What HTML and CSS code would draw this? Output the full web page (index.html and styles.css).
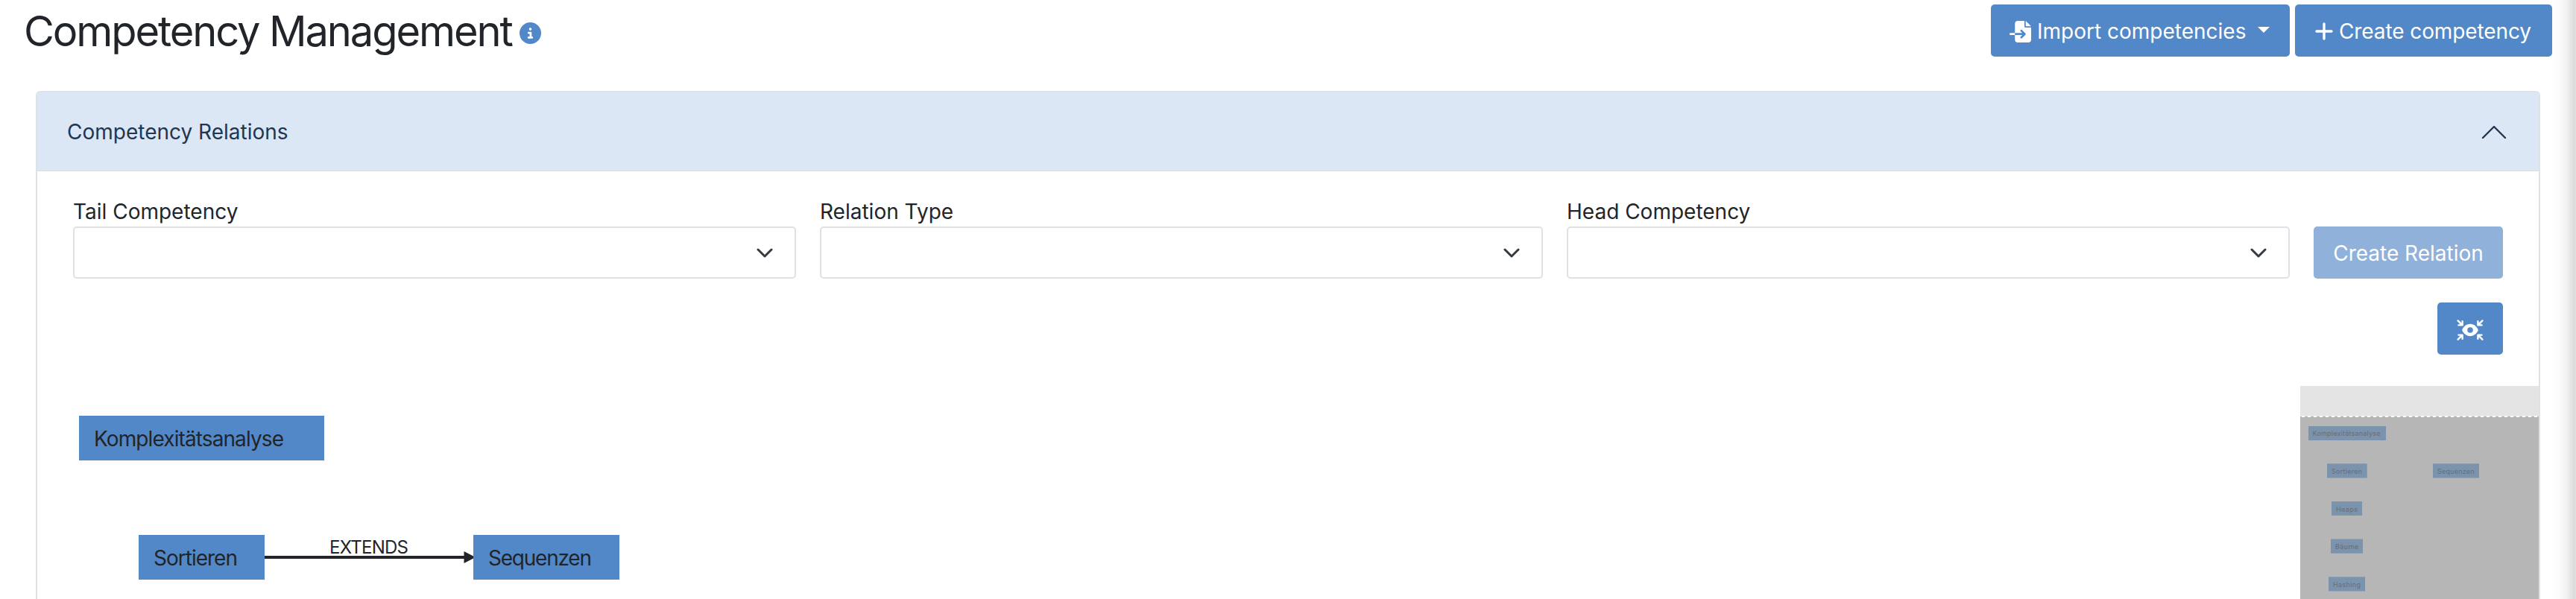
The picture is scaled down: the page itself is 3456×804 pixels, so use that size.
FILE: index.html
```
<!DOCTYPE html>
<html lang="en">
<head>
<meta charset="utf-8">
<title>Competency Management</title>
<link rel="stylesheet" href="styles.css">
</head>
<body>
<div class="page">
  <header class="page-header">
    <h1 class="title">Competency Management</h1>
    <svg class="info-icon" viewBox="0 0 512 512"><path fill="currentColor" d="M256 512A256 256 0 1 0 256 0a256 256 0 1 0 0 512zM216 336h24V272H216c-13.300 0-24-10.700-24-24s10.700-24 24-24h48c13.300 0 24 10.700 24 24v88h8c13.300 0 24 10.700 24 24s-10.700 24-24 24H216c-13.300 0-24-10.700-24-24s10.700-24 24-24zm40-208a32 32 0 1 1 0 64 32 32 0 1 1 0-64z"/></svg>
    <div class="actions">
      <button class="btn btn-import">
        <svg class="icon-import" viewBox="0 0 512 512"><path fill="currentColor" d="M128 64c0-35.300 28.700-64 64-64H352V128c0 17.700 14.300 32 32 32H512V448c0 35.300-28.700 64-64 64H192c-35.300 0-64-28.700-64-64V336H302.100l-39 39c-9.400 9.400-9.400 24.600 0 33.900s24.600 9.400 33.900 0l80-80c9.400-9.400 9.400-24.600 0-33.900l-80-80c-9.400-9.400-24.600-9.400-33.900 0s-9.400 24.600 0 33.900l39 39H128V64zm0 224v48H24c-13.300 0-24-10.700-24-24s10.700-24 24-24H128zM512 128H384V0L512 128z"/></svg>
        <span class="btn-label label-import">Import competencies</span>
        <span class="caret"></span>
      </button>
      <button class="btn btn-create">
        <svg class="icon-plus" viewBox="0 0 24 24"><path d="M12 2v20M2 12h20" stroke="currentColor" stroke-width="3.400" stroke-linecap="round"/></svg>
        <span class="btn-label label-create">Create competency</span>
      </button>
    </div>
  </header>

  <section class="card">
    <div class="card-header">
      <span class="card-title">Competency Relations</span>
      <svg class="chevron-up" viewBox="0 0 34 18"><path d="M2 17 17 2l15 15" fill="none" stroke="currentColor" stroke-width="2.400" stroke-linecap="round" stroke-linejoin="round"/></svg>
    </div>
    <div class="card-body">
      <div class="form-row">
        <label class="field"><span class="field-label">Tail Competency</span>
          <span class="select"><svg class="chevron-down" viewBox="0 0 24 14"><path d="m3 3 9 9 9-9" fill="none" stroke="currentColor" stroke-width="3" stroke-linecap="round" stroke-linejoin="round"/></svg></span></label>
        <label class="field"><span class="field-label">Relation Type</span>
          <span class="select"><svg class="chevron-down" viewBox="0 0 24 14"><path d="m3 3 9 9 9-9" fill="none" stroke="currentColor" stroke-width="3" stroke-linecap="round" stroke-linejoin="round"/></svg></span></label>
        <label class="field"><span class="field-label">Head Competency</span>
          <span class="select"><svg class="chevron-down" viewBox="0 0 24 14"><path d="m3 3 9 9 9-9" fill="none" stroke="currentColor" stroke-width="3" stroke-linecap="round" stroke-linejoin="round"/></svg></span></label>
        <button class="btn btn-relation" disabled><span class="btn-label">Create Relation</span></button>
      </div>
      <div class="tool-row">
        <button class="btn btn-center">
          <svg class="icon-center" viewBox="0 0 36 30">
            <g fill="none" stroke="currentColor" stroke-width="2.400" stroke-linecap="round" stroke-linejoin="round">
              <path d="M1.600 2.400 7.300 8.100M7.600 3.300V8.400H2.500"/>
              <path d="M34.400 2.400 28.700 8.100M28.400 3.300V8.400H33.500"/>
              <path d="M1.600 27.600 7.300 21.900M7.600 26.700V21.600H2.500"/>
              <path d="M34.400 27.600 28.700 21.900M28.400 26.700V21.600H33.500"/>
            </g>
            <path fill="currentColor" fill-rule="evenodd" d="M18 6.800c5.100 0 8.800 3.700 10.600 7.400.2.500.2 1.100 0 1.600C26.800 19.500 23.100 23.200 18 23.200S9.200 19.500 7.400 15.800c-.2-.5-.2-1.100 0-1.600C9.200 10.500 12.900 6.800 18 6.800zm0 4.400a3.800 3.800 0 1 0 0 7.600 3.800 3.800 0 1 0 0-7.600z"/>
          </svg>
        </button>
      </div>
      <div class="graph">
        <svg class="graph-canvas" width="3036" height="286" viewBox="50 518 3036 286">
          <g class="nodes">
            <rect x="106" y="558" width="329" height="60"/>
            <rect x="186" y="718" width="169" height="60"/>
          </g>
          <path class="edge" d="M355 748H624"/>
          <path class="arrow" d="M622.500 740 638 748 622.500 756z"/>
          <g class="nodes"><rect x="635" y="718" width="196" height="60"/></g>
          <g class="node-text">
            <text x="126" y="599" textLength="255">Komplexitätsanalyse</text>
            <text x="206" y="759" textLength="113">Sortieren</text>
            <text x="655" y="759" textLength="139">Sequenzen</text>
          </g>
          <text class="edge-text" x="442" y="743" textLength="106">EXTENDS</text>
        </svg>
        <svg class="minimap" width="320" height="286" viewBox="3086 518 320 286">
          <rect class="mini-view" x="3086" y="559" width="320" height="245"/>
          <path class="mini-dash" d="M3088 559H3406"/>
          <g class="mini-nodes">
            <rect x="3097" y="572" width="104" height="19"/>
            <rect x="3122" y="622.300" width="53.700" height="19.200"/>
            <rect x="3264" y="622.300" width="62" height="19.200"/>
            <rect x="3128" y="673" width="41" height="19"/>
            <rect x="3127" y="723.500" width="43" height="19.200"/>
            <rect x="3124" y="774.300" width="49" height="19.200"/>
          </g>
          <g class="mini-text">
            <text x="3102.500" y="585" textLength="91">Komplexitätsanalyse</text>
            <text x="3128" y="636" textLength="41">Sortieren</text>
            <text x="3270" y="636" textLength="49.500">Sequenzen</text>
            <text x="3134" y="687" textLength="29">Heaps</text>
            <text x="3133" y="737" textLength="31">Bäume</text>
            <text x="3130" y="788" textLength="37">Hashing</text>
          </g>
        </svg>
      </div>
    </div>
  </section>
  <div class="edge-shadow"></div>
</div>
</body>
</html>
```
FILE: styles.css
```
* { box-sizing: border-box; }

body {
  margin: 0;
  background: #fff;
  color: #212529;
  font-family: Inter, "Liberation Sans", sans-serif;
  font-size: 28px;
  font-weight: 430;
  line-height: 42px;
}

.page {
  position: relative;
  display: flex;
  flex-direction: column;
  height: 804px;
  overflow: hidden;
}

.page-header {
  display: flex;
  align-items: flex-start;
  height: 122px;
  padding: 6px 32px 0;
}

.title {
  margin: 0;
  font-size: 56px;
  font-weight: 430;
  line-height: 72px;
  letter-spacing: -2.1px;
  white-space: nowrap;
}

.info-icon {
  width: 29px;
  height: 29px;
  margin: 24px 0 0 10px;
  color: #5288c8;
}

.actions { display: flex; gap: 7px; margin-left: auto; }

.btn {
  display: flex;
  align-items: center;
  height: 70px;
  padding: 2px 25px 0;
  border: 0;
  border-radius: 5px;
  background: #5288c8;
  color: #fff;
  font: inherit;
  white-space: nowrap;
}

.btn-import { width: 401px; }
.btn-create { width: 345px; }
.icon-import { width: 29px; height: 29px; margin-top: 1px; }
.label-import { margin-left: 8px; }
.caret {
  margin: -4px 2px 0 auto;
  border-top: 8px solid currentColor;
  border-left: 8px solid transparent;
  border-right: 8px solid transparent;
}
.icon-plus { width: 24px; height: 24px; margin-left: 2px; }
.label-create { margin-left: 8px; letter-spacing: -0.1px; }

.card {
  flex: 1;
  display: flex;
  flex-direction: column;
  margin: 0 48px;
  border: 2px solid #dee2e6;
  border-bottom: 0;
  border-radius: 6px 6px 0 0;
  overflow: hidden;
}

.card-header {
  display: flex;
  align-items: center;
  justify-content: space-between;
  height: 106px;
  padding: 2px 43px 0 40px;
  border-bottom: 2px solid #dee2e6;
  background: #dbe7f5;
  color: #213651;
}

.chevron-up { width: 34px; height: 18px; }

.card-body { display: flex; flex-direction: column; }

.form-row {
  display: flex;
  align-items: flex-end;
  gap: 32px;
  padding: 32px 48px 0;
}

.field { flex: 1; display: flex; flex-direction: column; }
.field-label { margin-bottom: -2px; line-height: 44px; }

.select {
  display: flex;
  align-items: center;
  justify-content: flex-end;
  height: 70px;
  padding-right: 28px;
  border: 2px solid #dee2e6;
  border-radius: 5px;
  color: #343a40;
}
.chevron-down { width: 24px; height: 14px; }

.btn-relation { width: 254px; justify-content: center; background: #8fb1da; }

.tool-row { display: flex; justify-content: flex-end; padding: 32px 48px 42px; }
.btn-center { width: 88px; justify-content: center; padding: 0; }
.icon-center { width: 36px; height: 30px; margin-top: 3px; }

.graph { display: flex; height: 286px; }
.graph-canvas, .minimap { display: block; flex: none; }
.nodes { fill: #5288c8; }
.node-text { fill: #212529; font-size: 28px; }
.edge { stroke: #212529; stroke-width: 4; }
.arrow { fill: #212529; }
.edge-text { fill: #212529; font-size: 24px; }

.minimap { background: #e4e4e4; }
.mini-view { fill: #b6b6b6; }
.mini-dash { stroke: #fff; stroke-width: 2; stroke-dasharray: 4 4; }
.mini-nodes { fill: #7c93ae; }
.mini-text { fill: #666e78; font-size: 9px; }

/* Soft shade cast by the panel beyond the right edge */
.edge-shadow {
  position: absolute;
  top: 0;
  right: 0;
  width: 34px;
  height: 100%;
  background: linear-gradient(to right, rgba(0, 0, 0, 0), rgba(0, 0, 0, 0.02) 35%, rgba(0, 0, 0, 0.06) 65%, rgba(0, 0, 0, 0.15) 94%, rgba(0, 0, 0, 0.12));
}
```
